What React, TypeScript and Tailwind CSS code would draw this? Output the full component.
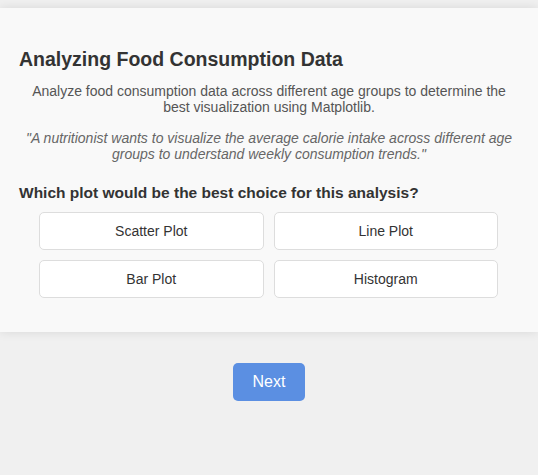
import React from "react";

export default function App() {
  const options = ["Scatter Plot", "Line Plot", "Bar Plot", "Histogram"];
  return (
    <div className="min-h-[475px] w-full bg-[#f0f0f0] pt-2 font-['Liberation_Sans',Arial,sans-serif]">
      <div className="bg-[#f9f9f9] px-5 pt-5 pb-5 shadow-[0_0_10px_rgba(0,0,0,0.1)]">
        <h2 className="mt-[20px] mb-[12px] ml-[-1px] text-[19.5px] leading-[23px] font-bold text-[#333]">
          Analyzing Food Consumption Data
        </h2>
        <p className="text-center text-[14px] leading-[16px] text-[#555]">
          Analyze food consumption data across different age groups to determine the best visualization using Matplotlib.
        </p>
        <p className="mt-[15px] text-center text-[14px] leading-[16px] italic text-[#666]">
          "A nutritionist wants to visualize the average calorie intake across different age groups to understand weekly consumption trends."
        </p>
        <h3 className="mt-[22px] ml-[-1px] text-[15.5px] leading-[18px] font-bold text-[#333]">
          Which plot would be the best choice for this analysis?
        </h3>
        <div className="mr-5 ml-[19px] mt-[10px] mb-[14px] grid grid-cols-2 gap-[10px]">
          {options.map((o) => (
            <button
              key={o}
              className="h-[38px] rounded-[5px] border border-[#ddd] bg-white text-[14px] text-[#333]"
            >
              {o}
            </button>
          ))}
        </div>
      </div>
      <div className="mt-[31px] flex justify-center">
        <button className="h-[38px] rounded-[5px] bg-[#5b8fe2] px-5 text-[16px] text-white">
          Next
        </button>
      </div>
    </div>
  );
}
